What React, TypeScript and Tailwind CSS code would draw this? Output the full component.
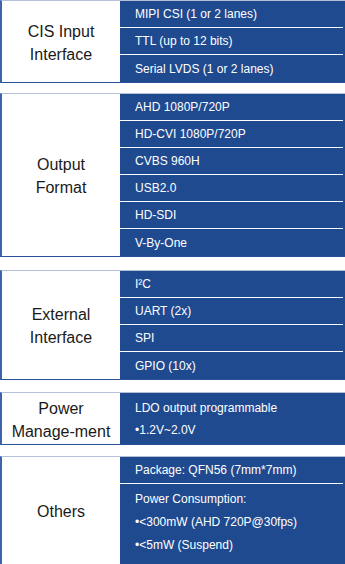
const groups = [
  { label: ["CIS Input", "Interface"], rows: [["MIPI CSI (1 or 2 lanes)"], ["TTL (up to 12 bits)"], ["Serial LVDS (1 or 2 lanes)"]], mt: "mt-0" },
  { label: ["Output", "Format"], rows: [["AHD 1080P/720P"], ["HD-CVI 1080P/720P"], ["CVBS 960H"], ["USB2.0"], ["HD-SDI"], ["V-By-One"]], mt: "mt-[10px]" },
  { label: ["External", "Interface"], rows: [["I²C"], ["UART (2x)"], ["SPI"], ["GPIO (10x)"]], mt: "mt-[13px]" },
  { label: ["Power", "Manage-ment"], rows: [["LDO output programmable", "•1.2V~2.0V"]], mt: "mt-[12px]" },
  { label: ["Others"], rows: [["Package: QFN56 (7mm*7mm)"], ["Power Consumption:", "•<300mW (AHD 720P@30fps)", "•<5mW (Suspend)"]], mt: "mt-[11px]" },
];

export default function App() {
  return (
    <div className="w-[345px] h-[564px] bg-white overflow-hidden font-['Liberation_Sans',Arial,sans-serif]">
      {groups.map((g, i) => (
        <div key={i} className={`${g.mt} flex border-t border-t-[#b3c0d8] border-l-2 border-l-[#3d64aa] border-b border-b-[#2a5398]`}>
          <div className="w-[118px] shrink-0 bg-white flex flex-col items-center justify-center text-[16px] leading-[23px] text-[#1a1a1a] pt-[2px]">
            {g.label.map((l, j) => (
              <span key={j}>{l}</span>
            ))}
          </div>
          <div className="flex-1 bg-[#1f4a90] pr-[2px] flex flex-col">
            {g.rows.map((r, j) => (
              <div
                key={j}
                className={`flex flex-col pl-[15px] text-[12px] text-white ${j < g.rows.length - 1 ? "border-b border-b-white" : ""} ${r.length === 1 ? "h-[27px] leading-[26px] justify-center" : r.length === 2 ? "h-[51px] leading-[22px] justify-center" : "h-[80px] leading-[23px] pt-[4px]"}`}
              >
                {r.map((t, k) => (
                  <span key={k}>{t}</span>
                ))}
              </div>
            ))}
          </div>
        </div>
      ))}
    </div>
  );
}
